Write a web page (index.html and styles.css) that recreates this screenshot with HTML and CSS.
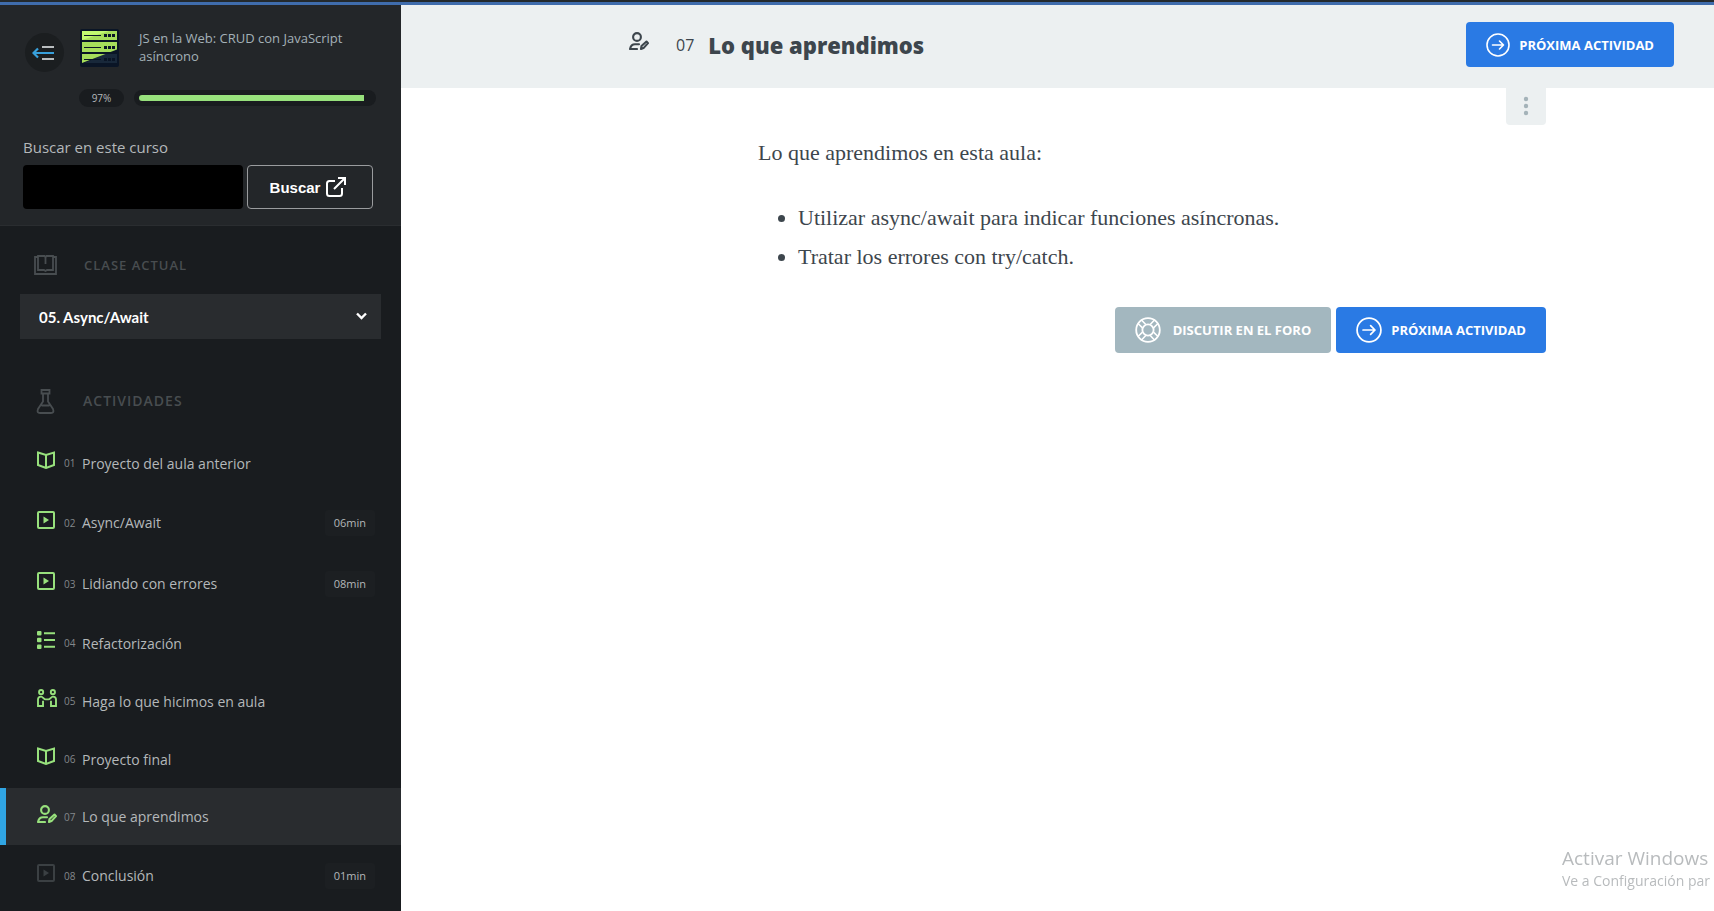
FILE: index.html
```html
<!DOCTYPE html>
<html lang="es">
<head>
<meta charset="utf-8">
<meta name="viewport" content="width=device-width, initial-scale=1">
<title>Lo que aprendimos</title>
<link rel="stylesheet" href="styles.css">
</head>
<body>
<svg class="sprite" aria-hidden="true">
  <symbol id="i-book" viewBox="0 0 18 18"><path d="M1 1.500 9 4l8-2.500V14l-8 3-8-3zM9 4v13" fill="none" stroke="currentColor" stroke-width="2"/></symbol>
  <symbol id="i-video" viewBox="0 0 18 18"><rect x="1" y="1" width="16" height="16" rx="1" fill="none" stroke="currentColor" stroke-width="2"/><path d="M6.500 5.500 12 9l-5.500 3.500z" fill="currentColor"/></symbol>
  <symbol id="i-list" viewBox="0 0 18 18"><g fill="currentColor"><rect width="4.500" height="4.500" rx="1"/><rect y="6.700" width="4.500" height="4.500" rx="1"/><rect y="13.400" width="4.500" height="4.500" rx="1"/><path d="M7 1.200h11v2H7zM7 8h11v2H7zM7 14.700h11v2H7z"/></g></symbol>
  <symbol id="i-pair" viewBox="0 0 21 19"><g fill="none" stroke="currentColor" stroke-width="2"><circle cx="4.300" cy="3.300" r="2.200"/><circle cx="16.700" cy="3.300" r="2.200"/><path d="M6.300 12.500V18H1V11q0-3 3.200-3c2 0 3 3 4.800 3h3c1.800 0 2.800-3 4.800-3Q20 8 20 11v7h-5.300v-5.500"/></g></symbol>
  <symbol id="i-person" viewBox="0 0 20 18"><g fill="none" stroke="currentColor" stroke-width="2.100" stroke-linejoin="round" stroke-linecap="round"><circle cx="8" cy="5" r="3.900"/><path d="M10 12.300H6q-4 0-5 4.700h7"/><path d="m12 17 .5-3 5-4.500 1.500 1.600-4.500 5z"/></g></symbol>
  <symbol id="i-next" viewBox="0 0 24 24"><g fill="none" stroke="currentColor" stroke-width="1.600" stroke-linecap="round" stroke-linejoin="round"><circle cx="12" cy="12" r="11"/><path d="M6.500 12h11M13.500 8l4 4-4 4"/></g></symbol>
</svg>

<div class="topline"></div>
<div class="layout">
  <aside class="sidebar">
    <header class="course">
      <div class="course-head">
        <button class="toggle" type="button" aria-label="Ocultar menú">
          <svg width="22" height="16" viewBox="0 0 22 16" fill="none" stroke-width="2.200"><path d="M10 2h12M10 14h12" stroke="#b9bdbf"/><path d="M1.500 8H22M6 3.500 1.500 8 6 12.500" stroke="#38a0db"/></svg>
        </button>
        <svg class="course-logo" viewBox="0 0 39 38" aria-hidden="true">
          <rect width="39" height="38" rx="2" fill="#0a1526"/>
          <path d="M25 25h12v9H4z" fill="#18283a"/>
          <path d="M2 2h35v9H2zM2 13h35v7.500L30.500 23H2zM2 25h23.500L2 34z" fill="#a6dd5b"/>
          <path d="M2 2h27L2 11z" fill="#c2fa70"/>
          <g stroke="#0a1526" fill="none"><path d="M4 6.500h17M4 18.500h17M4 30.500h17" stroke-width="1.200"/><path d="M24 6.500h11M24 18.500h11M24 30.500h11" stroke-width="3" stroke-dasharray="3 1"/></g>
        </svg>
        <a class="course-name" href="#">JS en la Web: CRUD con JavaScript asíncrono</a>
      </div>
      <div class="course-progress">
        <span class="percent">97%</span>
        <progress class="meter" value="97" max="100" aria-label="Progreso del curso"></progress>
      </div>
      <form class="search">
        <label for="q">Buscar en este curso</label>
        <div class="search-row">
          <input id="q" type="search">
          <button type="button">Buscar
            <svg width="20" height="20" viewBox="0 0 20 20" fill="none" stroke="currentColor" stroke-width="2" aria-hidden="true"><path d="M9 4H3.500Q1 4 1 6.500v10Q1 19 3.500 19h10q2.500 0 2.500-2.500V11M12 1h7v7M19 1 8 12"/></svg>
          </button>
        </div>
      </form>
    </header>

    <section class="current">
      <h2 class="section-title"><svg width="23" height="20" viewBox="0 0 23 20" fill="none" stroke="currentColor" stroke-width="1.800" aria-hidden="true"><path d="M4 2H1v17h21V2h-3M4 1h6.500l1 1.500 1-1.500H19v14h-6l-1.500 1-1.500-1H4zM11.500 3v6"/></svg><label for="class">CLASE ACTUAL</label></h2>
      <div class="select-box">
        <select id="class"><option>05. Async/Await</option></select>
        <svg width="11" height="8" viewBox="0 0 11 8" fill="none" stroke="currentColor" stroke-width="2.400" aria-hidden="true"><path d="m1 1.500 4.500 4.500L10 1.500"/></svg>
      </div>
    </section>

    <nav class="activities" aria-label="Actividades">
      <h2 class="section-title"><svg width="23" height="25" viewBox="0 0 23 25" fill="none" stroke="currentColor" stroke-width="1.800" aria-hidden="true"><path d="M7.500 1h8v3.500h-8zM9 4.500v8L4 20q-1.500 4 2 4h11q3.500 0 2-4l-5-7.500v-8M7.500 16.500h8"/></svg>ACTIVIDADES</h2>
      <ul>
        <li><a href="#"><svg class="icon"><use href="#i-book"/></svg><small>01</small><span>Proyecto del aula anterior</span></a></li>
        <li><a class="timed" href="#"><svg class="icon"><use href="#i-video"/></svg><small>02</small><span>Async/Await</span><time>06min</time></a></li>
        <li><a class="timed" href="#"><svg class="icon"><use href="#i-video"/></svg><small>03</small><span>Lidiando con errores</span><time>08min</time></a></li>
        <li><a href="#"><svg class="icon"><use href="#i-list"/></svg><small>04</small><span>Refactorización</span></a></li>
        <li><a href="#"><svg class="icon wide"><use href="#i-pair"/></svg><small>05</small><span>Haga lo que hicimos en aula</span></a></li>
        <li><a href="#"><svg class="icon"><use href="#i-book"/></svg><small>06</small><span>Proyecto final</span></a></li>
        <li><a class="active" href="#" aria-current="page"><svg class="icon wide"><use href="#i-person"/></svg><small>07</small><span>Lo que aprendimos</span></a></li>
        <li><a class="timed pending" href="#"><svg class="icon"><use href="#i-video"/></svg><small>08</small><span>Conclusión</span><time>01min</time></a></li>
      </ul>
    </nav>
  </aside>

  <main class="main">
    <header class="lesson-bar">
      <svg class="lesson-icon" aria-hidden="true"><use href="#i-person"/></svg>
      <span class="lesson-number">07</span>
      <h1>Lo que aprendimos</h1>
      <a class="btn" href="#"><svg width="24" height="24" aria-hidden="true"><use href="#i-next"/></svg>PRÓXIMA ACTIVIDAD</a>
    </header>
    <div class="content">
      <article>
        <button class="more" type="button" aria-label="Más opciones"><svg width="6" height="20" viewBox="0 0 6 20" fill="currentColor"><circle cx="3" cy="3" r="2.200"/><circle cx="3" cy="10" r="2.200"/><circle cx="3" cy="17" r="2.200"/></svg></button>
        <p>Lo que aprendimos en esta aula:</p>
        <ul>
          <li>Utilizar async/await para indicar funciones asíncronas.</li>
          <li>Tratar los errores con try/catch.</li>
        </ul>
        <div class="actions">
          <a class="btn forum" href="#"><svg width="26" height="26" viewBox="0 0 26 26" fill="none" stroke="currentColor" stroke-width="1.800" aria-hidden="true"><circle cx="13" cy="13" r="11.800"/><circle cx="13" cy="13" r="5.600"/><path d="M7.500 10.800 3 6.500M10.800 7.500 6.500 3M15.200 7.500 19.500 3M18.500 10.800 23 6.500M18.500 15.200l4.500 4.300M15.200 18.500l4.300 4.500M10.800 18.500 6.500 23M7.500 15.200 3 19.500" stroke-width="1.600"/></svg>DISCUTIR EN EL FORO</a>
          <a class="btn" href="#"><svg width="26" height="26" aria-hidden="true"><use href="#i-next"/></svg>PRÓXIMA ACTIVIDAD</a>
        </div>
      </article>
    </div>
  </main>
</div>
<div class="watermark"><strong>Activar Windows</strong><span>Ve a Configuración par</span></div>
</body>
</html>
```

FILE: styles.css
```css
* { box-sizing: border-box; }
body {
  margin: 0;
  height: 100vh;
  overflow: hidden;
  display: flex;
  flex-direction: column;
  font-family: "Open Sans", "Noto Sans", sans-serif;
  color: #3d464d;
  background: #fff;
}
a { color: inherit; text-decoration: none; }
button, input, select { font: inherit; color: inherit; }
ul { margin: 0; padding: 0; list-style: none; }
svg { flex: none; display: block; }
.sprite { display: none; }

.topline { flex: none; height: 5px; background: #3f6cac; border-top: 2px solid #23292d; }
.layout { flex: 1; min-height: 0; display: grid; grid-template-columns: 401px 1fr; }

/* Sidebar */
.sidebar { background: #191c1f; color: #b4b8ba; overflow: hidden; }
.course { background: #232629; border-bottom: 1px solid #2a2d30; padding: 24px 25px 16px; }
.course-head { display: flex; align-items: flex-start; }
.toggle {
  flex: none;
  display: grid;
  place-items: center;
  width: 39px;
  height: 39px;
  margin-top: 4px;
  padding: 0 3px 0 0;
  border: 0;
  border-radius: 50%;
  background: #1b1e20;
}
.course-logo { width: 39px; height: 38px; margin-left: 16px; }
.course-name { flex: 1; margin-left: 20px; font-size: 13px; line-height: 18px; color: #a3b1b8; }
.course-progress { display: flex; align-items: center; gap: 10px; margin: 17px 0 0 54px; }
.percent {
  width: 45px;
  border-radius: 9px;
  background: #191c1f;
  font-size: 10px;
  line-height: 18px;
  text-align: center;
}
.meter {
  flex: 1;
  height: 16px;
  padding: 5px;
  border: 0;
  border-radius: 8px;
  background: #191c1f;
  appearance: none;
}
.meter::-webkit-progress-bar { background: transparent; }
.meter::-webkit-progress-value { background: #97e07c; border-radius: 3px 0 0 3px; }
.search { margin: 30px -2px 0; }
.search label { display: block; font-size: 15px; line-height: 20px; }
.search-row { display: flex; gap: 4px; margin: 8px 5px 0 0; }
.search input { flex: 1; min-width: 0; height: 44px; border: 0; border-radius: 4px; background: #000; }
.search button {
  display: flex;
  align-items: center;
  justify-content: center;
  gap: 6px;
  width: 126px;
  padding: 0 8px 0 4px;
  border: 1px solid #9a9c9e;
  border-radius: 4px;
  background: transparent;
  color: #fff;
  font: bold 15px "Liberation Sans", sans-serif;
}

.section-title {
  display: flex;
  align-items: center;
  gap: 27px;
  margin: 0;
  padding: 0 34px;
  font-size: 13px;
  font-weight: 600;
  line-height: 26px;
  letter-spacing: 1px;
  color: #484d50;
}
.current { padding-top: 26px; }
.select-box { position: relative; margin: 16px 20px 0; color: #fff; }
.select-box select {
  display: block;
  width: 100%;
  height: 45px;
  padding: 0 40px 0 19px;
  border: 0;
  border-radius: 0;
  appearance: none;
  background: #292c2f;
  font: bold 15px Lato, sans-serif;
}
.select-box svg { position: absolute; right: 14px; top: 18px; pointer-events: none; }
.activities { padding-top: 49px; }
.activities .section-title { font-size: 14px; gap: 26px; }
.activities ul { margin-top: 20px; }
.activities a {
  display: flex;
  align-items: center;
  height: 58px;
  padding: 0 26px 0 31px;
  border-left: 6px solid transparent;
  font-size: 14px;
}
.activities .timed { height: 61px; }
.activities .active { height: 57px; background: #292c2f; border-color: #30a5e3; }
.icon { width: 18px; height: 18px; margin: 0 9px 6px 0; color: #97e07c; }
.icon.wide { width: 20px; margin-right: 7px; }
.pending .icon { color: #3b4043; }
.activities small { width: 18px; font-size: 10px; color: #84888b; }
.activities time {
  margin-left: auto;
  padding: 0 9px;
  border-radius: 3px;
  background: #1c1f22;
  font-size: 11px;
  line-height: 26px;
}

/* Lesson */
.lesson-bar {
  display: flex;
  align-items: center;
  height: 83px;
  padding: 0 40px 4px 228px;
  background: #ecf0f1;
}
.lesson-icon { width: 20px; height: 18px; margin-bottom: 8px; }
.lesson-number { margin-left: 27px; font-size: 16px; line-height: 24px; }
.lesson-bar h1 { margin: 0 auto 0 14px; font-size: 22px; line-height: 30px; font-weight: 800; }
.btn {
  display: flex;
  align-items: center;
  gap: 9px;
  height: 45px;
  padding: 0 20px;
  border-radius: 4px;
  background: #2a7ae4;
  color: #fff;
  font-size: 13px;
  line-height: 18px;
  font-weight: 700;
}
.content { display: grid; grid-template-columns: 17fr minmax(0, 788px) 8fr; }
article {
  grid-column: 2;
  font: 22px/39px "Source Serif Pro", "Liberation Serif", serif;
}
.more {
  display: grid;
  place-items: center;
  width: 40px;
  height: 37px;
  margin-left: auto;
  padding: 0 0 2px;
  border: 0;
  border-radius: 0 0 4px 4px;
  background: #ecf0f1;
  color: #a4b3b9;
}
article p { margin: 8px 0 26px; }
article ul { padding-left: 40px; list-style: disc; }
.actions { display: flex; justify-content: flex-end; gap: 5px; margin-top: 31px; font-family: "Open Sans", sans-serif; }
.actions .btn { height: 46px; }
.forum { background: #a3b7bf; gap: 12px; }

.watermark {
  position: fixed;
  left: calc(100% - 152px);
  bottom: 20px;
  color: #b8bbbd;
  font-size: 14px;
  line-height: 20px;
  white-space: nowrap;
}
.watermark strong { display: block; font-size: 19px; line-height: 26px; font-weight: 400; }
```
